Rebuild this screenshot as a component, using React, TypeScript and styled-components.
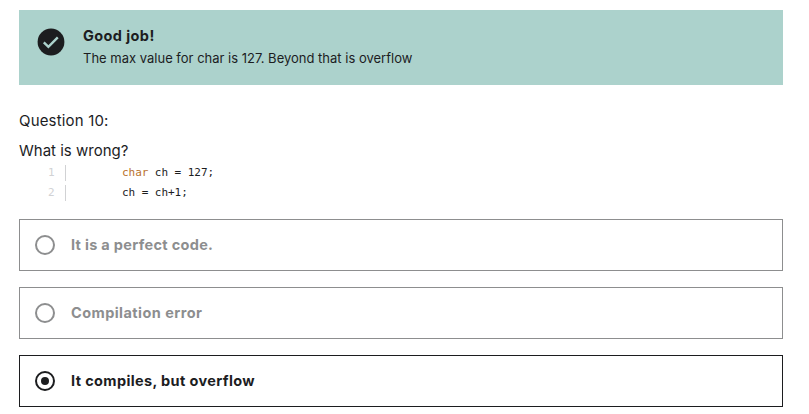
import React from "react";
import styled, { createGlobalStyle } from "styled-components";

const GlobalStyle = createGlobalStyle`
  * { box-sizing: border-box; }
  body {
    margin: 0;
    background: #fff;
    color: #1c1d1f;
    font-family: Inter, "Liberation Sans", sans-serif;
  }
`;

const Page = styled.main`
  width: 809px;
  height: 414px;
  padding: 10px 26px 0 19px;
  overflow: hidden;
`;

const Banner = styled.section`
  display: flex;
  height: 75px;
  padding: 16px 18px 0;
  gap: 18px;
  background: #acd2cc;
`;

const BannerIcon = styled.svg`
  display: block;
  width: 28px;
  height: 28px;
  margin-top: 2px;
`;

const BannerTitle = styled.div`
  font-size: 14.5px;
  font-weight: 700;
  line-height: 20px;
  letter-spacing: 0.4px;
`;

const BannerText = styled.div`
  margin-top: 2px;
  font-size: 13px;
  line-height: 20px;
  white-space: nowrap;
`;

const Question = styled.div`
  padding-top: 24px;
`;

const Prompt = styled.p<{ $tracking: string }>`
  margin: 0;
  height: 30px;
  font-size: 15px;
  line-height: 24px;
  letter-spacing: ${(p) => p.$tracking};
`;

const Code = styled.div`
  margin-top: -6px;
  padding: 0 0 0 27px;
  font-family: "DejaVu Sans Mono", monospace;
  font-size: 11px;
  line-height: 20px;
`;

const CodeLine = styled.div`
  display: flex;
  align-items: center;
  height: 20px;
`;

const LineNumber = styled.span`
  width: 20px;
  height: 16px;
  padding-left: 2px;
  border-right: 1px solid #d1d2d4;
  color: #d1d2d4;
  line-height: 16px;
`;

const Source = styled.code`
  margin-left: 56px;
  font: inherit;
  white-space: pre;
  letter-spacing: -0.05px;
`;

const Keyword = styled.span`
  color: #b9712c;
`;

const Options = styled.div`
  display: grid;
  gap: 16px;
  margin-top: 16px;
`;

const Option = styled.label<{ $selected?: boolean }>`
  display: flex;
  align-items: center;
  height: 52px;
  padding-left: 15px;
  gap: 16px;
  border: 1px solid ${(p) => (p.$selected ? "#1c1d1f" : "#8d8e8f")};
  color: ${(p) => (p.$selected ? "#1c1d1f" : "#8d8e8f")};
`;

const Radio = styled.span`
  display: grid;
  place-items: center;
  width: 20px;
  height: 20px;
  border: 2px solid currentColor;
  border-radius: 50%;
`;

const RadioDot = styled.span`
  width: 8px;
  height: 8px;
  border-radius: 50%;
  background: currentColor;
`;

const OptionText = styled.span<{ $tracking: string }>`
  font-size: 14.5px;
  font-weight: 700;
  line-height: 22px;
  letter-spacing: ${(p) => p.$tracking};
`;

const answers = [
  { text: "It is a perfect code.", tracking: "0.31px", selected: false },
  { text: "Compilation error", tracking: "0.44px", selected: false },
  { text: "It compiles, but overflow", tracking: "0.37px", selected: true },
];

export default function App() {
  return (
    <>
      <GlobalStyle />
      <Page>
        <Banner>
          <BannerIcon viewBox="0 0 28 28">
            <circle cx="14" cy="14" r="13.4" fill="#1c1d1f" />
            <path d="M6.8 14.3 L11.4 18.8 L20.8 9.4" fill="none" stroke="#acd2cc" strokeWidth="2.4" />
          </BannerIcon>
          <div>
            <BannerTitle>Good job!</BannerTitle>
            <BannerText>The max value for char is 127. Beyond that is overflow</BannerText>
          </div>
        </Banner>
        <Question>
          <Prompt $tracking="0.17px">Question 10:</Prompt>
          <Prompt $tracking="0px">What is wrong?</Prompt>
          <Code>
            <CodeLine>
              <LineNumber>1</LineNumber>
              <Source><Keyword>char</Keyword> ch = 127;</Source>
            </CodeLine>
            <CodeLine>
              <LineNumber>2</LineNumber>
              <Source>ch = ch+1;</Source>
            </CodeLine>
          </Code>
        </Question>
        <Options>
          {answers.map((a) => (
            <Option key={a.text} $selected={a.selected}>
              <Radio>{a.selected && <RadioDot />}</Radio>
              <OptionText $tracking={a.tracking}>{a.text}</OptionText>
            </Option>
          ))}
        </Options>
      </Page>
    </>
  );
}
